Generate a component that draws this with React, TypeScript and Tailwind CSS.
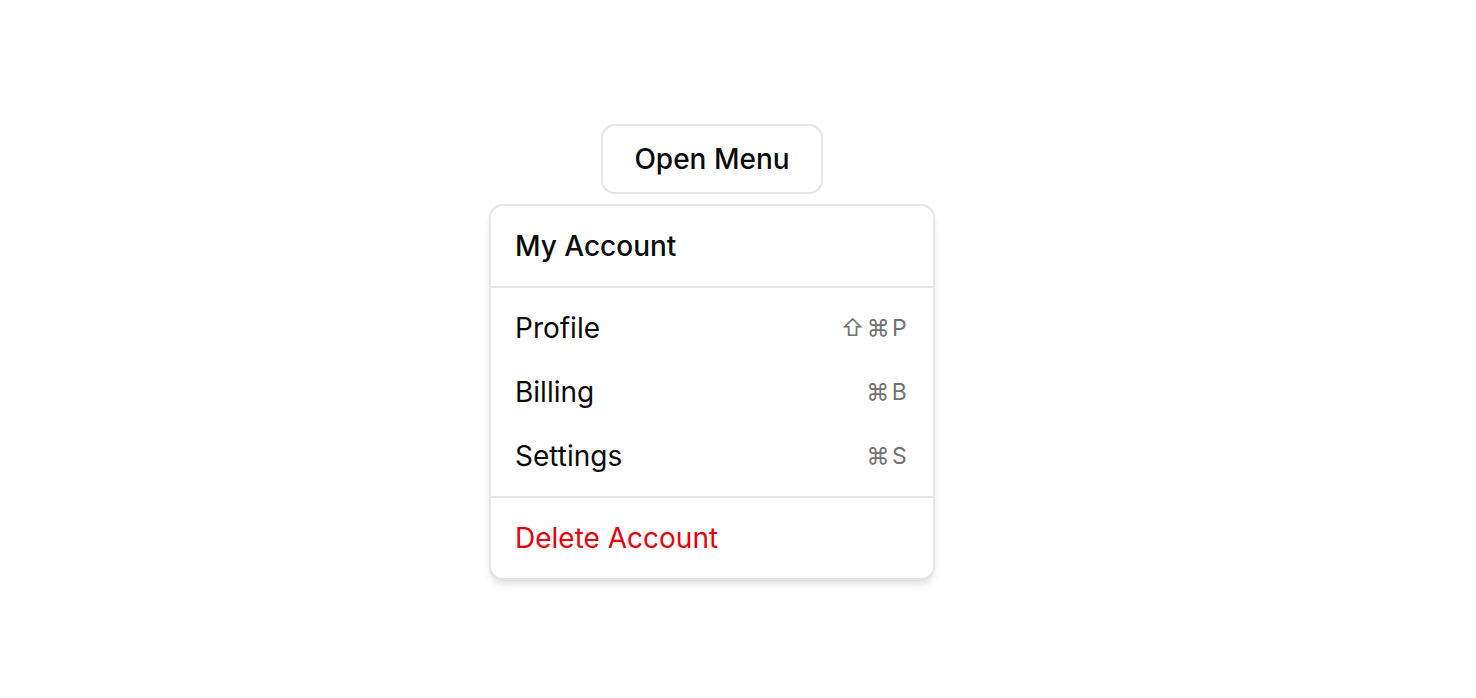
import React from "react";

const items = [
  { label: "Profile", shortcut: "⇧⌘P" },
  { label: "Billing", shortcut: "⌘B" },
  { label: "Settings", shortcut: "⌘S" },
];

export default function App() {
  return (
    <div
      className="min-h-screen w-full bg-white text-black"
      style={{ fontFamily: "Inter, 'Noto Sans', sans-serif" }}
    >
      <div className="flex flex-col items-center pt-[124px] pr-[52px]">
        {/* Trigger */}
        <button className="h-[70px] w-[222px] rounded-[14px] border-2 border-[#e5e5e5] bg-white text-[28px] font-medium text-[#0a0a0a]">
          Open Menu
        </button>

        {/* Menu */}
        <div className="mt-[10px] w-[446px] overflow-hidden rounded-[14px] border-2 border-[#e5e5e5] bg-white shadow-[0_6px_10px_-2px_rgba(0,0,0,0.12),0_2px_4px_-2px_rgba(0,0,0,0.08)]">
          <div className="flex h-[80px] items-center px-[24px] text-[28px] font-medium text-[#0a0a0a]">
            My Account
          </div>
          <div className="h-[2px] bg-[#e5e5e5]" />
          <div className="py-2">
            {items.map((item) => (
              <div
                key={item.label}
                className="flex h-16 items-center justify-between pl-[24px] pr-[24px]"
              >
                <span className="text-[28px] text-[#0a0a0a]">{item.label}</span>
                <span className="text-[23px] tracking-[0.1em] text-[#737373]">
                  {item.shortcut}
                </span>
              </div>
            ))}
          </div>
          <div className="h-[2px] bg-[#e5e5e5]" />
          <div className="py-2">
            <div className="flex h-16 items-center px-[24px] text-[28px] text-[#e7000b]">
              Delete Account
            </div>
          </div>
        </div>
      </div>
    </div>
  );
}
